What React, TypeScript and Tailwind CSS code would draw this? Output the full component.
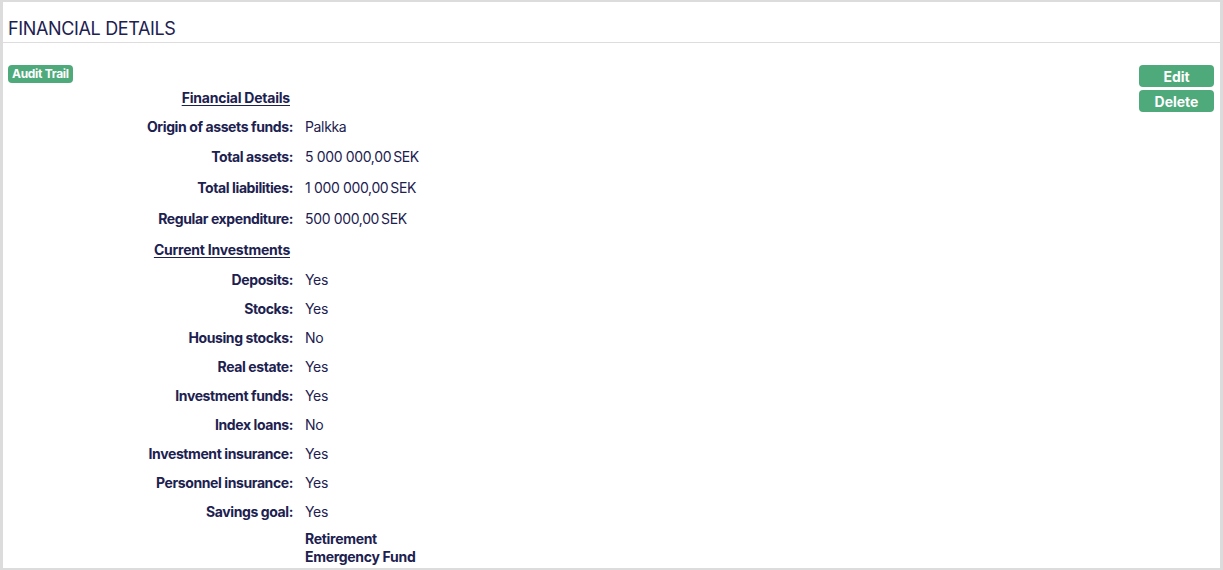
import React from "react";

const font = { fontFamily: "Inter, 'Noto Sans', sans-serif" };

type Row = { label: string; value?: string; amount?: string; h: string };

const rows1: Row[] = [
  { label: "Origin of assets funds:", value: "Palkka", h: "h-[30px]" },
  { label: "Total assets:", amount: "5 000 000,00", h: "h-[31px]" },
  { label: "Total liabilities:", amount: "1 000 000,00", h: "h-[31px]" },
  { label: "Regular expenditure:", amount: "500 000,00", h: "h-[31px]" },
];

const rows2: Row[] = [
  { label: "Deposits:", value: "Yes", h: "h-[29px]" },
  { label: "Stocks:", value: "Yes", h: "h-[29px]" },
  { label: "Housing stocks:", value: "No", h: "h-[29px]" },
  { label: "Real estate:", value: "Yes", h: "h-[29px]" },
  { label: "Investment funds:", value: "Yes", h: "h-[29px]" },
  { label: "Index loans:", value: "No", h: "h-[29px]" },
  { label: "Investment insurance:", value: "Yes", h: "h-[29px]" },
  { label: "Personnel insurance:", value: "Yes", h: "h-[29px]" },
  { label: "Savings goal:", value: "Yes", h: "h-[29px]" },
];

function DataRow({ r }: { r: Row }) {
  return (
    <div className={`flex items-center ${r.h}`}>
      <div className="w-[285px] text-right font-bold text-[14px] tracking-[-0.4px] text-[#1c2150]">{r.label}</div>
      <div className="ml-[12px] text-[14px] tracking-[-0.35px] text-[#1c2150]">
        {r.amount ? (
          <span>
            {r.amount}
            <span className="ml-[2px]">SEK</span>
          </span>
        ) : (
          r.value
        )}
      </div>
    </div>
  );
}

function Heading({ text, h }: { text: string; h: string }) {
  return (
    <div className={`flex items-center ${h}`}>
      <div className="w-[282px] text-right font-bold text-[14px] tracking-[-0.22px] text-[#1c2150] underline underline-offset-2">
        {text}
      </div>
    </div>
  );
}

export default function App() {
  return (
    <div style={font} className="w-[1223px] h-[570px] bg-white">
      <div className="h-full border-t-2 border-l-[3px] border-r-[3px] border-b-[2px] border-[#dcdcdc] flex flex-col">
        <div className="h-[41px] border-b border-[#dddddd] flex items-start px-[5px] pt-[15px]">
          <h1 className="text-[18px] leading-[24px] text-[#1c2150] font-normal tracking-[-0.35px]">FINANCIAL DETAILS</h1>
        </div>
        <div className="flex pt-[22px] pl-[5px] pr-[6px]">
          <div className="flex flex-col">
            <div className="self-start h-[18px] px-[4px] rounded-[4px] bg-[#4ea97b] text-white text-[12px] tracking-[-0.3px] font-bold flex items-center">
              Audit Trail
            </div>
            <div>
              <Heading text="Financial Details" h="h-[28px]" />
              {rows1.map((r) => (
                <DataRow key={r.label} r={r} />
              ))}
              <Heading text="Current Investments" h="h-[31px]" />
              {rows2.map((r) => (
                <DataRow key={r.label} r={r} />
              ))}
              <div className="flex pt-[4px]">
                <div className="w-[285px]" />
                <div className="ml-[12px] text-[14px] leading-[18px] font-bold tracking-[-0.3px] text-[#1c2150]">
                  <div>Retirement</div>
                  <div>Emergency Fund</div>
                </div>
              </div>
            </div>
          </div>
          <div className="ml-auto flex flex-col gap-[3px]">
            <div className="w-[75px] h-[22px] rounded-[4px] bg-[#4ea97b] text-white text-[14px] font-bold flex items-center justify-center">
              Edit
            </div>
            <div className="w-[75px] h-[22px] rounded-[4px] bg-[#4ea97b] text-white text-[14px] font-bold flex items-center justify-center">
              Delete
            </div>
          </div>
        </div>
      </div>
    </div>
  );
}
